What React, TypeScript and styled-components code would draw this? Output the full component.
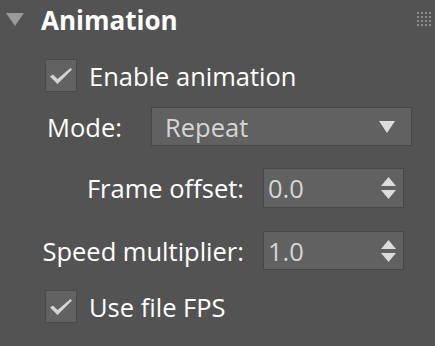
import React from "react";
import styled, { createGlobalStyle } from "styled-components";

const Global = createGlobalStyle`
  html, body { margin: 0; padding: 0; background: #535353; }
  body { font-family: "Open Sans", "Noto Sans", sans-serif; }
`;

const Panel = styled.div`
  width: 435px;
  height: 346px;
  background: #535353;
  box-sizing: border-box;
  overflow: hidden;
  display: flex;
  flex-direction: column;
`;

const Header = styled.div`
  height: 40px;
  display: flex;
  align-items: center;
  padding-left: 6px;
  padding-right: 4px;
`;

const Caret = styled.svg`
  width: 18px;
  height: 13px;
  margin-top: -2px;
  flex: none;
`;

const Title = styled.div`
  margin-left: 17px;
  font-size: 26px;
  font-weight: 700;
  color: #ffffff;
  flex: 1;
  line-height: 40px;
`;

const Grip = styled.div`
  display: grid;
  grid-template-columns: repeat(4, 2px);
  grid-auto-rows: 2px;
  gap: 2px;
  align-self: flex-start;
  margin-top: 12px;
`;

const Dot = styled.span`
  width: 2px;
  height: 2px;
  background: #8e8e8e;
`;

const Row = styled.div<{ $top: number; $h: number }>`
  margin-top: ${(p) => p.$top}px;
  height: ${(p) => p.$h}px;
  display: flex;
  align-items: center;
`;

const CheckRow = styled(Row)`
  padding-left: 45px;
  gap: 12px;
`;

const Box = styled.div`
  width: 32px;
  height: 33px;
  box-sizing: border-box;
  background: #626262;
  border: 1px solid #4a4a4a;
  display: flex;
  align-items: center;
  justify-content: center;
  flex: none;
`;

const Label = styled.span`
  font-size: 25.5px;
  color: #ffffff;
  white-space: nowrap;
`;

const ModeRow = styled(Row)`
  padding-left: 47px;
`;

const ModeLabel = styled(Label)`
  width: 104px;
`;

const Select = styled.div`
  width: 261px;
  height: 39px;
  box-sizing: border-box;
  background: #616161;
  border: 1px solid #474747;
  display: flex;
  align-items: center;
  justify-content: space-between;
  padding: 0 16px 0 13px;
`;

const Value = styled.span`
  font-size: 25.5px;
  color: #d6d6d6;
`;

const FieldRow = styled(Row)`
  display: grid;
  grid-template-columns: 244px 141px;
  column-gap: 19px;
  align-items: center;
`;

const RightLabel = styled(Label)`
  text-align: right;
`;

const Spinner = styled.div`
  height: 100%;
  box-sizing: border-box;
  background: #616161;
  border: 1px solid #474747;
  display: flex;
  align-items: center;
  justify-content: space-between;
  padding: 0 7px 0 4px;
`;

const Arrows = styled.div`
  display: flex;
  flex-direction: column;
  gap: 4px;
`;

const Tri = ({ up, w, h }: { up?: boolean; w: number; h: number }) => (
  <svg width={w} height={h} viewBox={`0 0 ${w} ${h}`} style={{ display: "block" }}>
    <polygon points={up ? `0,${h} ${w},${h} ${w / 2},0` : `0,0 ${w},0 ${w / 2},${h}`} fill="#dcdcdc" />
  </svg>
);

const Check = () => (
  <svg width="24" height="18" viewBox="0 0 24 18">
    <path d="M1 9.5 L4 7.5 L8.5 12 L21.5 1 L23 2.5 L8.5 17 Z" fill="#d4d4d4" />
  </svg>
);

export default function App() {
  return (
    <Panel>
      <Global />
      <Header>
        <Caret viewBox="0 0 18 13">
          <polygon points="0,0 18,0 9,13" fill="#9a9a9a" />
        </Caret>
        <Title>Animation</Title>
        <Grip>
          {Array.from({ length: 16 }).map((_, i) => (
            <Dot key={i} />
          ))}
        </Grip>
      </Header>
      <CheckRow $top={19} $h={33}>
        <Box>
          <Check />
        </Box>
        <Label>Enable animation</Label>
      </CheckRow>
      <ModeRow $top={15} $h={39}>
        <ModeLabel>Mode:</ModeLabel>
        <Select>
          <Value>Repeat</Value>
          <Tri w={16} h={12} />
        </Select>
      </ModeRow>
      <FieldRow $top={22} $h={40}>
        <RightLabel>Frame offset:</RightLabel>
        <Spinner>
          <Value>0.0</Value>
          <Arrows>
            <Tri up w={15} h={9} />
            <Tri w={15} h={9} />
          </Arrows>
        </Spinner>
      </FieldRow>
      <FieldRow $top={23} $h={39}>
        <RightLabel>Speed multiplier:</RightLabel>
        <Spinner>
          <Value>1.0</Value>
          <Arrows>
            <Tri up w={15} h={9} />
            <Tri w={15} h={9} />
          </Arrows>
        </Spinner>
      </FieldRow>
      <CheckRow $top={20} $h={33}>
        <Box>
          <Check />
        </Box>
        <Label>Use file FPS</Label>
      </CheckRow>
    </Panel>
  );
}
